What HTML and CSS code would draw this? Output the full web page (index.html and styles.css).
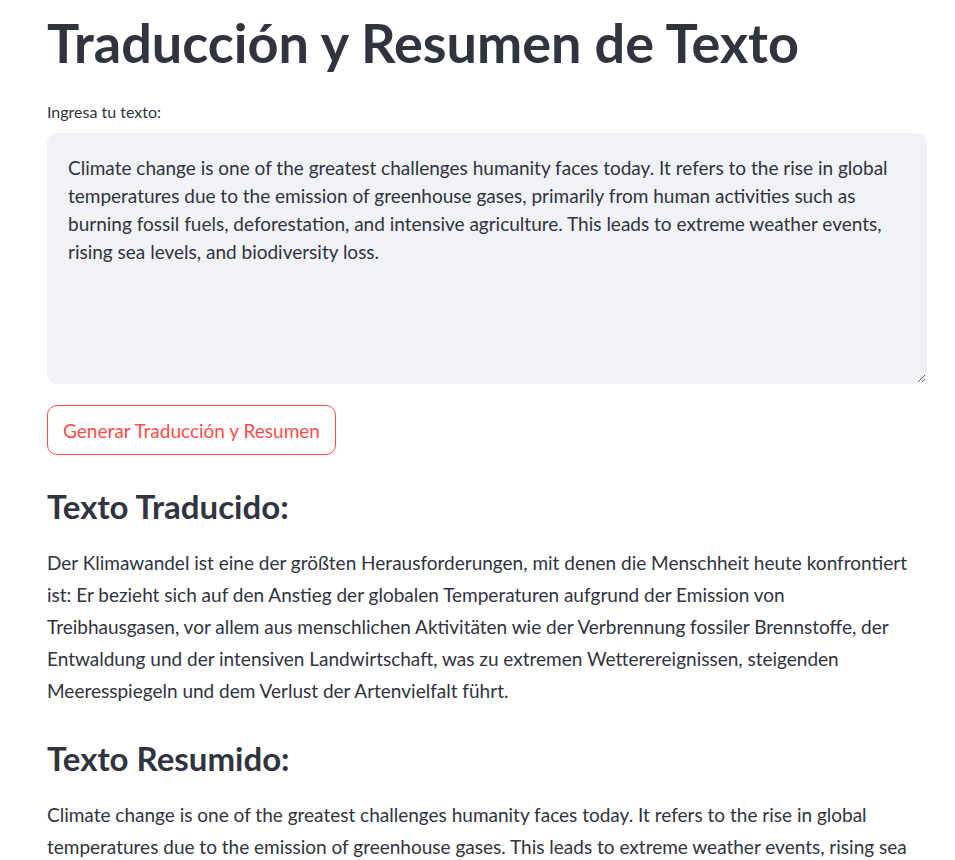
FILE: index.html
```html
<!DOCTYPE html>
<html lang="es">
<head>
<meta charset="utf-8">
<title>Traducción y Resumen de Texto</title>
<link rel="stylesheet" href="styles.css">
</head>
<body>
<main class="page">
  <h1 class="title">Traducción y Resumen de Texto</h1>
  <label class="field-label" for="src">Ingresa tu texto:</label>
  <textarea id="src" class="input-area">Climate change is one of the greatest challenges humanity faces today. It refers to the rise in global temperatures due to the emission of greenhouse gases, primarily from human activities such as burning fossil fuels, deforestation, and intensive agriculture. This leads to extreme weather events, rising sea levels, and biodiversity loss.</textarea>
  <div class="actions">
    <button class="btn" type="button">Generar Traducción y Resumen</button>
  </div>
  <h3 class="section-title">Texto Traducido:</h3>
  <p class="section-text section-text--de">Der Klimawandel ist eine der größten Herausforderungen, mit denen die Menschheit heute konfrontiert ist: Er bezieht sich auf den Anstieg der globalen Temperaturen aufgrund der Emission von Treibhausgasen, vor allem aus menschlichen Aktivitäten wie der Verbrennung fossiler Brennstoffe, der Entwaldung und der intensiven Landwirtschaft, was zu extremen Wetterereignissen, steigenden Meeresspiegeln und dem Verlust der Artenvielfalt führt.</p>
  <h3 class="section-title">Texto Resumido:</h3>
  <p class="section-text">Climate change is one of the greatest challenges humanity faces today. It refers to the rise in global temperatures due to the emission of greenhouse gases. This leads to extreme weather events, rising sea levels, and biodiversity loss.</p>
</main>
</body>
</html>
```

FILE: styles.css
```css
* { box-sizing: border-box; }
html, body { margin: 0; background: #ffffff; }
body {
  font-family: Lato, "Noto Sans", sans-serif;
  color: rgb(49, 51, 63);
}
.page {
  width: 880px;
  margin-left: 47px;
  display: flex;
  flex-direction: column;
}
.title {
  margin: 10px 0 0;
  font-size: 54px;
  font-weight: 700;
  line-height: 66px;
}
.field-label {
  margin-top: 26px;
  font-size: 16px;
  line-height: 20px;
}
.input-area {
  margin-top: 11px;
  width: 880px;
  height: 251px;
  background: rgb(240, 242, 246);
  border: 1px solid transparent;
  border-radius: 10px;
  padding: 20px;
  font-family: inherit;
  font-size: 19px;
  line-height: 28px;
  color: rgb(49, 51, 63);
  resize: vertical;
  outline: none;
}
.actions {
  margin-top: 21px;
  display: flex;
}
.btn {
  height: 50px;
  padding: 0 15px;
  background: #ffffff;
  border: 1px solid rgb(255, 75, 75);
  border-radius: 10px;
  color: rgb(255, 75, 75);
  font-family: inherit;
  font-size: 19px;
}
.section-title {
  margin: 29px 0 0;
  font-size: 33px;
  font-weight: 700;
  line-height: 44px;
}
.section-text {
  margin: 19px 0 0;
  font-size: 19px;
  line-height: 32px;
}
.section-text--de {
  width: 869px;
}
```
